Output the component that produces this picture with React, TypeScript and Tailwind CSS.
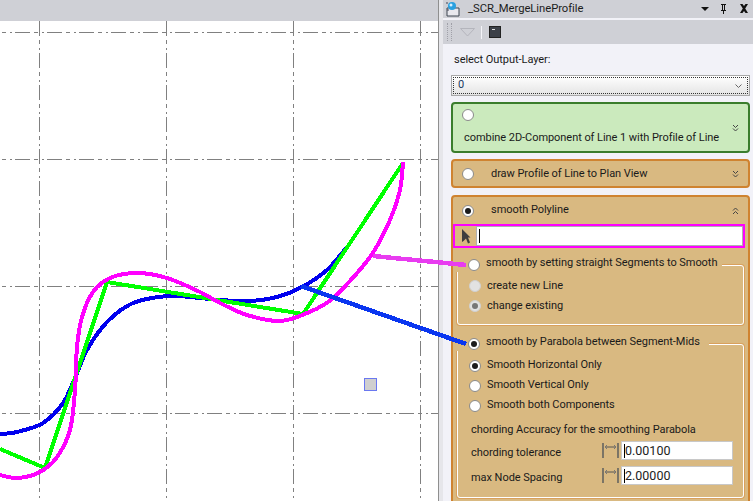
const font = "font-['Roboto','Noto_Sans',sans-serif]";

const gridX = [39.5, 166.5, 293.5, 420.5];
const gridY = [32.5, 159.5, 286.5, 413.5];

const blue: [number, number][] = [
  [0, 434], [17, 432], [43, 423], [63, 403], [75, 378], [87, 350], [107, 322], [133, 303], [167, 296],
  [190, 297], [220, 300], [250, 301], [277, 297], [302, 287], [327, 270], [347, 247],
];
const green: [number, number][] = [[0, 449], [45, 468], [107, 282], [303, 314], [403, 163]];
const magenta: [number, number][] = [
  [0, 475], [18, 478], [40, 472], [57, 457], [70, 430], [75, 390], [77, 347], [82, 317], [93, 292], [110, 278],
  [137, 273], [167, 278], [200, 292], [220, 303], [247, 315], [280, 321], [307, 313], [333, 298], [370, 257],
  [390, 220], [400, 190], [403, 162],
];

// catmull-rom through the points
function smooth(pts: [number, number][]) {
  let d = `M${pts[0][0]} ${pts[0][1]}`;
  for (let i = 0; i < pts.length - 1; i++) {
    const p0 = pts[i - 1] || pts[i];
    const p1 = pts[i];
    const p2 = pts[i + 1];
    const p3 = pts[i + 2] || p2;
    const c1x = p1[0] + (p2[0] - p0[0]) / 6;
    const c1y = p1[1] + (p2[1] - p0[1]) / 6;
    const c2x = p2[0] - (p3[0] - p1[0]) / 6;
    const c2y = p2[1] - (p3[1] - p1[1]) / 6;
    d += ` C${c1x} ${c1y} ${c2x} ${c2y} ${p2[0]} ${p2[1]}`;
  }
  return d;
}

function Canvas() {
  return (
    <svg viewBox="0 21 438 480" className="block h-[480px] w-[438px] bg-white">
      {gridX.map((x) => (
        <line key={x} x1={x} x2={x} y1={21} y2={501} stroke="#808080" strokeDasharray="15 4 4 4 2 3" shapeRendering="crispEdges" />
      ))}
      {gridY.map((y) => (
        <line key={y} x1={-17} x2={438} y1={y} y2={y} stroke="#808080" strokeDasharray="15 4 4 4 2 3" shapeRendering="crispEdges" />
      ))}
      <path d={smooth(blue)} fill="none" stroke="#0000ee" strokeWidth={4} shapeRendering="crispEdges" />
      <path d={green.map((p, i) => `${i ? "L" : "M"}${p[0]} ${p[1]}`).join(" ")} fill="none" stroke="#00ff00" strokeWidth={4} shapeRendering="crispEdges" />
      <path d={smooth(magenta)} fill="none" stroke="#ff00ff" strokeWidth={4} shapeRendering="crispEdges" />
      <rect x={364.5} y={378.5} width={12} height={12} fill="#cfcfcf" stroke="#6a78f0" shapeRendering="crispEdges" />
    </svg>
  );
}

function Radio({ checked, disabled }: { checked?: boolean; disabled?: boolean }) {
  return (
    <span
      className={`flex h-3 w-3 shrink-0 items-center justify-center rounded-full border ${
        disabled ? "border-[#d0d0d0] bg-[#e2e2e2]" : "border-[#8a8a8a] bg-white"
      }`}
    >
      {checked && <span className={`h-[6px] w-[6px] rounded-full ${disabled ? "bg-[#777]" : "bg-[#1c1c1c]"}`} />}
    </span>
  );
}

function Chevrons({ up }: { up?: boolean }) {
  return (
    <svg width="7" height="8" viewBox="0 0 7 8" className="shrink-0" fill="none" stroke="#444">
      {up ? <path d="M1 3.500l2.500-2.500 2.500 2.500M1 7l2.500-2.500L6 7" /> : <path d="M1 1l2.500 2.500L6 1M1 4.500L3.500 7 6 4.500" />}
    </svg>
  );
}

function WidthIcon() {
  return (
    <svg width="17" height="17" viewBox="0 0 17 17" className="shrink-0" fill="none">
      <path d="M1 1v15M16 1v15" stroke="#4a5058" strokeWidth="1.300" />
      <path d="M3 5h11" stroke="#555" />
      <path d="M5 3L3 5l2 2M12 3l2 2-2 2" stroke="#777" />
    </svg>
  );
}

function OptionRow({ label, checked, disabled, textClass }: { label: string; checked?: boolean; disabled?: boolean; textClass?: string }) {
  return (
    <div className="flex h-5 items-center gap-[6px] pl-[11px]">
      <Radio checked={checked} disabled={disabled} />
      <span className={textClass ?? "-mt-[1px]"}>{label}</span>
    </div>
  );
}

function NumberRow({ label, value, className }: { label: string; value: string; className?: string }) {
  return (
    <div className={`flex h-[19px] items-center pl-[13px] ${className ?? ""}`}>
      <span className="mt-[6px] w-[131px]">{label}</span>
      <WidthIcon />
      <div className="ml-[2px] flex h-[19px] w-[112px] items-center border border-[#c8c8c8] bg-white pl-[2px] text-[12.5px] tracking-normal text-[#222]">
        <span className="border-l border-black leading-[14px]">{value}</span>
      </div>
    </div>
  );
}

export default function App() {
  return (
    <div className={`relative flex h-[501px] w-[753px] overflow-hidden bg-[#f2f2f8] text-[11px] tracking-[-0.05px] text-[#1a1a1a] ${font}`}>
      <div className="w-[438px] shrink-0">
        <div className="h-[21px] bg-[#cfd0d6]" />
        <Canvas />
      </div>
      <div className="w-[5px] shrink-0 border-l border-[#8f8f8f] bg-[#e6e6ea]" />

      <div className="flex w-[310px] flex-col">
        {/* title */}
        <div className="flex h-[18px] shrink-0 items-center bg-[#cfd0d6] pl-[2px] pr-[5px]">
          <svg width="16" height="16" viewBox="0 0 16 16" className="shrink-0">
            <path d="M2 7h12v8H2z" fill="#e8e8ee" stroke="#3d4550" />
            <circle cx="7" cy="5" r="4" fill="#2aa0e0" />
            <circle cx="6" cy="4" r="1.500" fill="#d6f0ff" />
            <path d="M1 2h2M2 9h2" stroke="#445" />
          </svg>
          <span className="ml-[7px] text-[11.25px] text-[#1c1c1c]">_SCR_MergeLineProfile</span>
          <svg width="47" height="12" viewBox="0 0 47 12" className="ml-auto shrink-0" fill="#111">
            <path d="M0 4h8L4 8z" />
            <path d="M20 1h5v1h-1v5h1v1h-2v3h-1V8h-2V7h1V2h-1zM22 2v5h1V2z" />
            <path d="M39 1h2.500l1.500 2 1.500-2H47l-2.800 4.500L47 10h-2.500L43 8l-1.500 2H39l2.800-4.500z" />
          </svg>
        </div>
        <div className="h-[2px] shrink-0 bg-[#f2f2f8]" />
        {/* toolbar */}
        <div className="flex h-[24px] shrink-0 items-center bg-[#cfd0d6] pl-[4px]">
          <div className="h-[18px] w-[5px] border-x border-dotted border-[#a0a0a8]" />
          <svg width="15" height="9" viewBox="0 0 15 9" className="ml-[8px]" fill="none" stroke="#b4b5bc">
            <path d="M.5.500h14L7.500 8z" />
          </svg>
          <div className="ml-[6px] h-[13px] w-[1px] bg-[#f4f4f8]" />
          <div className="ml-[7px] flex h-[12px] w-[12px] items-start border border-[#222] bg-[#3c4048] p-[2px]">
            <div className="h-[1px] w-[3px] bg-[#ddd]" />
          </div>
        </div>

        <div className="flex flex-1 flex-col pl-[8px] pr-[3px]">
          <div className="shrink-0 pl-[3px] pt-[8px] leading-[16px]">select Output-Layer:</div>
          <div className="mt-[7px] flex h-[21px] shrink-0 items-center justify-between border border-[#a8a8a8] bg-linear-to-b from-white to-[#e4e4e4] p-px">
            <div className="flex h-full flex-1 items-center justify-between border border-dotted border-[#333] px-[4px]">
              <span className="text-[#1a3a60]">0</span>
              <svg width="7" height="4" viewBox="0 0 7 4" className="mr-[1px]" fill="none" stroke="#666">
                <path d="M.5.500l3 3 3-3" />
              </svg>
            </div>
          </div>

          <div className="mt-[6px] flex h-[51px] shrink-0 items-start justify-between rounded-[4px] border-2 border-[#3a7d2c] bg-[#cbeabd] pl-[9px] pr-[9px]">
            <div>
              <div className="pt-[5px]"><Radio /></div>
              <div className="ml-[2px] mt-[9px] whitespace-nowrap leading-[16px]">combine 2D-Component of Line 1 with Profile of Line</div>
            </div>
            <div className="pt-[20px]"><Chevrons /></div>
          </div>

          <div className="mt-[6px] flex h-[29px] shrink-0 items-center justify-between rounded-[4px] border-2 border-[#cf8330] bg-[#d9b981] pl-[9px] pr-[9px]">
            <div className="flex items-center">
              <Radio />
              <span className="ml-[17px] mt-[1px]">draw Profile of Line to Plan View</span>
            </div>
            <Chevrons />
          </div>

          <div className="mt-[7px] h-[320px] shrink-0 rounded-[4px] border-2 border-[#cf8330] bg-[#d9b981]">
            <div className="flex h-[27px] items-center justify-between pl-[9px] pr-[9px]">
              <div className="flex items-center">
                <Radio checked />
                <span className="ml-[17px]">smooth Polyline</span>
              </div>
              <Chevrons up />
            </div>

            <div className="mr-[3px] flex h-[24px] items-center border-2 border-[#ff00ff] bg-[#d9b981] pl-[7px]">
              <svg width="9" height="15" viewBox="0 0 9 15" className="shrink-0" fill="#3e3e3e">
                <path d="M0 0l8.500 8.500H6l2 5-2 1-2-5-2.500 2.500-1.500 1z" />
              </svg>
              <div className="ml-[5px] flex h-[20px] flex-1 items-center border border-[#b0b0b0] bg-white pl-[2px]">
                <div className="h-[14px] w-px bg-black" />
              </div>
            </div>

            <div className="ml-[4px] mr-[4px] mt-[17px] h-[60px] rounded-[3px] border border-white shadow-[0_0_0_1px_#d9a05c]">
              <div className="-ml-[2px] -mt-[8px] flex h-[14px] w-[266px] items-center gap-[6px] bg-[#d9b981] pl-[12px]">
                <Radio />
                <span className="-mt-[4px] whitespace-nowrap">smooth by setting straight Segments to Smooth</span>
              </div>
              <div className="mt-[4px]">
                <OptionRow label="create new Line" disabled textClass="mt-0" />
                <OptionRow label="change existing" checked disabled textClass="mt-0" />
              </div>
            </div>

            <div className="ml-[4px] mr-[4px] mt-[19px] h-[154px] rounded-[3px] border border-white shadow-[0_0_0_1px_#d9a05c]">
              <div className="-ml-[2px] -mt-[8px] flex h-[14px] w-[253px] items-center gap-[6px] bg-[#d9b981] pl-[12px]">
                <Radio checked />
                <span className="-mt-[3px] whitespace-nowrap">smooth by Parabola between Segment-Mids</span>
              </div>
              <div className="mt-[5px]">
                <OptionRow label="Smooth Horizontal Only" checked />
                <OptionRow label="Smooth Vertical Only" />
                <OptionRow label="Smooth both Components" />
              </div>
              <div className="mt-[3px] flex h-5 items-center pl-[13px] pt-[2px]">chording Accuracy for the smoothing Parabola</div>
              <NumberRow className="mt-[2px]" label="chording tolerance" value="0.00100" />
              <NumberRow className="mt-[6px]" label="max Node Spacing" value="2.00000" />
            </div>
          </div>
        </div>
      </div>

      {/* annotation leaders drawn over the panel */}
      <svg viewBox="0 0 753 501" className="pointer-events-none absolute left-0 top-0 h-[501px] w-[753px]">
        <path d="M373 256L466 265" stroke="#e83cf0" strokeWidth="4.500" fill="none" shapeRendering="crispEdges" />
        <path d="M301 286L466 344" stroke="#0a36f0" strokeWidth="4.500" fill="none" shapeRendering="crispEdges" />
      </svg>
    </div>
  );
}
